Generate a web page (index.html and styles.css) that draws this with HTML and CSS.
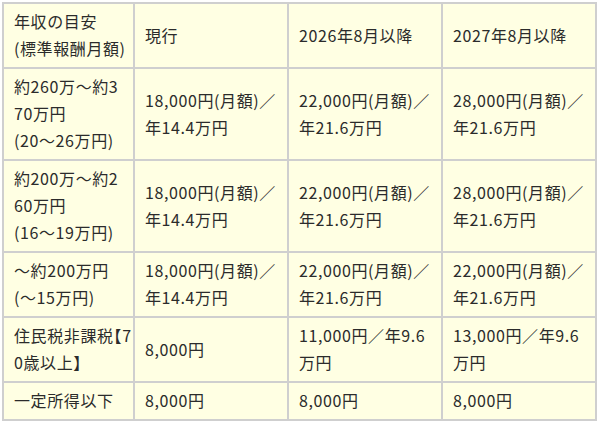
FILE: index.html
```html
<!DOCTYPE html>
<html lang="ja">
<head>
<meta charset="utf-8">
<title>年収の目安</title>
<link rel="stylesheet" href="styles.css">
</head>
<body>
<table class="fee-table">
  <colgroup>
    <col class="col-income">
    <col class="col-plan">
    <col class="col-plan">
    <col class="col-plan">
  </colgroup>
  <tr>
    <td>年収の目安<br>(標準報酬月額)</td>
    <td>現行</td>
    <td>2026年8月以降</td>
    <td>2027年8月以降</td>
  </tr>
  <tr>
    <td>約260万～約3<br>70万円<br>(20～26万円)</td>
    <td>18,000円(月額)／<br>年14.4万円</td>
    <td>22,000円(月額)／<br>年21.6万円</td>
    <td>28,000円(月額)／<br>年21.6万円</td>
  </tr>
  <tr>
    <td>約200万～約2<br>60万円<br>(16～19万円)</td>
    <td>18,000円(月額)／<br>年14.4万円</td>
    <td>22,000円(月額)／<br>年21.6万円</td>
    <td>28,000円(月額)／<br>年21.6万円</td>
  </tr>
  <tr>
    <td>～約200万円<br>(～15万円)</td>
    <td>18,000円(月額)／<br>年14.4万円</td>
    <td>22,000円(月額)／<br>年21.6万円</td>
    <td>22,000円(月額)／<br>年21.6万円</td>
  </tr>
  <tr>
    <td>住民税非課税<span class="bracket">【</span>7<br>0歳以上<span class="bracket">】</span></td>
    <td>8,000円</td>
    <td>11,000円／年9.6<br>万円</td>
    <td>13,000円／年9.6<br>万円</td>
  </tr>
  <tr>
    <td>一定所得以下</td>
    <td>8,000円</td>
    <td>8,000円</td>
    <td>8,000円</td>
  </tr>
</table>
</body>
</html>
```
FILE: styles.css
```css
html, body {
  margin: 0;
  padding: 0;
  background: #ffffff;
}
body {
  padding: 2px 0 0 2px;
  font-family: "Noto Sans CJK JP", "Noto Sans", sans-serif;
  color: #2b2b2b;
}
.fee-table {
  border-collapse: collapse;
  table-layout: fixed;
  width: 594px;
  background: #ffffe3;
  font-size: 16px;
  line-height: 27px;
  letter-spacing: 0.6px;
}
.col-income { width: 131px; }
.col-plan { width: 154px; }
.fee-table td {
  border: 2px solid #cfcfcf;
  padding: 4px 0 5px 10px;
  vertical-align: middle;
  text-align: left;
  white-space: nowrap;
  overflow: hidden;
}
.bracket {
  font-feature-settings: "halt";
}
```
